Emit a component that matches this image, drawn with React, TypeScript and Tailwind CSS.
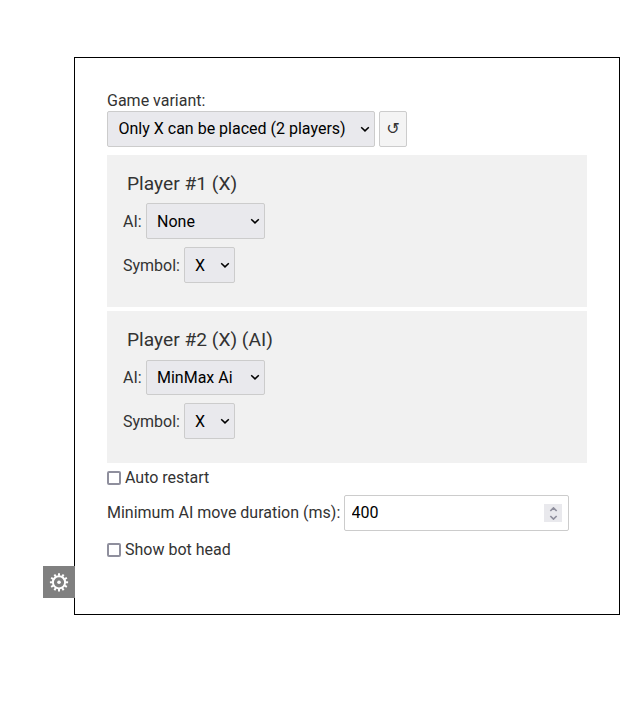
import { useState } from "react";

function Chevron({ className, strokeWidth = 1.5 }: { className: string; strokeWidth?: number }) {
  return (
    <svg className={className} width="10" height="6" viewBox="0 0 10 6" fill="none" stroke="currentColor" strokeWidth={strokeWidth}>
      <path d="M1.2 1.2 L5 4.9 L8.8 1.2" />
    </svg>
  );
}

function Gear() {
  return (
    <svg width="20" height="20" viewBox="-10 -10.3 20 20" fill="none" stroke="currentColor">
      <circle r="6.1" strokeWidth="2" />
      <circle r="1.8" fill="currentColor" stroke="none" />
      {[0, 30, 60, 90, 120, 150, 180, 210, 240, 270, 300, 330].map((a) => (
        <path key={a} d="M0 -6.5 V-9.1" strokeWidth="2" transform={`rotate(${a})`} />
      ))}
    </svg>
  );
}

function Select({ options, value, width }: { options: string[]; value: string; width: string }) {
  const [selected, setSelected] = useState(value);
  return (
    <div className={`grid h-9 items-center ${width}`}>
      <select
        value={selected}
        onChange={(e) => setSelected(e.target.value)}
        className="col-start-1 row-start-1 h-full w-full appearance-none rounded-[2px] border border-[#cccccc] bg-[#e9e9ed] pl-2.5 text-base leading-6 text-black"
      >
        {options.map((o) => (
          <option key={o}>{o}</option>
        ))}
      </select>
      <Chevron className="pointer-events-none col-start-1 row-start-1 mr-[5px] justify-self-end text-black" />
    </div>
  );
}

function Player({ title, ai, aiSelect }: { title: string; ai: string; aiSelect: string }) {
  return (
    <section className="h-[152px] w-[480px] bg-[#f1f1f1] px-4 pt-4">
      <h3 className="ml-1 h-8 text-[19.2px] leading-[26px]">{title}</h3>
      <div className="flex h-9 items-center gap-1">
        <span className="w-[19px] pt-0.5">AI:</span>
        <Select width={aiSelect} options={["None", "MinMax Ai"]} value={ai} />
      </div>
      <div className="mt-2 flex h-9 items-center gap-1">
        <span className="w-[57px] pt-0.5">Symbol:</span>
        <Select width="w-[51px] [&>select]:pt-0.5" options={["X", "O"]} value="X" />
      </div>
    </section>
  );
}

function Check({ label }: { label: string }) {
  return (
    <label className="flex h-6 items-center gap-1">
      <input type="checkbox" className="mb-px size-3.5 appearance-none rounded-[2px] border-2 border-[#8f8f9d] bg-white" />
      {label}
    </label>
  );
}

export default function App() {
  return (
    <main className="flex h-[714px] w-[620px] items-start bg-white pl-[43px] pt-[57px] font-['Roboto','DejaVu_Sans',sans-serif] text-base leading-6 text-[#333333]">
      <button aria-label="Settings" className="z-10 -mr-px mt-[509px] flex size-8 shrink-0 items-center justify-center bg-[#808080] text-white">
        <Gear />
      </button>
      <div className="h-[558px] w-[546px] shrink-0 border border-black px-8 pt-[31px]">
        <div className="h-[22px]">Game variant:</div>
        <div className="flex gap-1">
          <Select width="w-[268px] [&>select]:pl-[10.5px]" options={["Only X can be placed (2 players)"]} value="Only X can be placed (2 players)" />
          <button className="flex h-9 w-7 items-center justify-center rounded-[2px] border border-[#cccccc] bg-[#f4f4f4] font-['DejaVu_Sans',sans-serif] text-base">
            ↺
          </button>
        </div>
        <div className="mt-2 flex flex-col gap-1">
          <Player title="Player #1 (X)" ai="None" aiSelect="w-[119px] [&>select]:pt-0.5" />
          <Player title="Player #2 (X) (AI)" ai="MinMax Ai" aiSelect="w-[119px] [&>select]:h-[35px] [&>select]:self-end [&>select]:pt-px" />
        </div>
        <div className="mt-[3px]">
          <Check label="Auto restart" />
        </div>
        <div className="mt-[5px] flex h-9 items-center">
          <span className="w-[237px] whitespace-nowrap">Minimum AI move duration (ms):</span>
          <div className="flex h-9 w-[225px] items-center rounded-[2px] border border-[#cccccc] bg-white pl-[6.5px] pr-1.5">
            <input defaultValue="400" className="w-0 flex-1 text-base leading-6 text-black outline-none" />
            <div className="flex h-[18px] w-[18px] flex-col items-center justify-center gap-[3px] bg-[#e9e9ed] text-[#8f8f9d]">
              <Chevron strokeWidth={2} className="h-[5px] w-[9px] rotate-180" />
              <Chevron strokeWidth={2} className="h-[5px] w-[9px]" />
            </div>
          </div>
        </div>
        <div className="mt-[7px]">
          <Check label="Show bot head" />
        </div>
      </div>
    </main>
  );
}
